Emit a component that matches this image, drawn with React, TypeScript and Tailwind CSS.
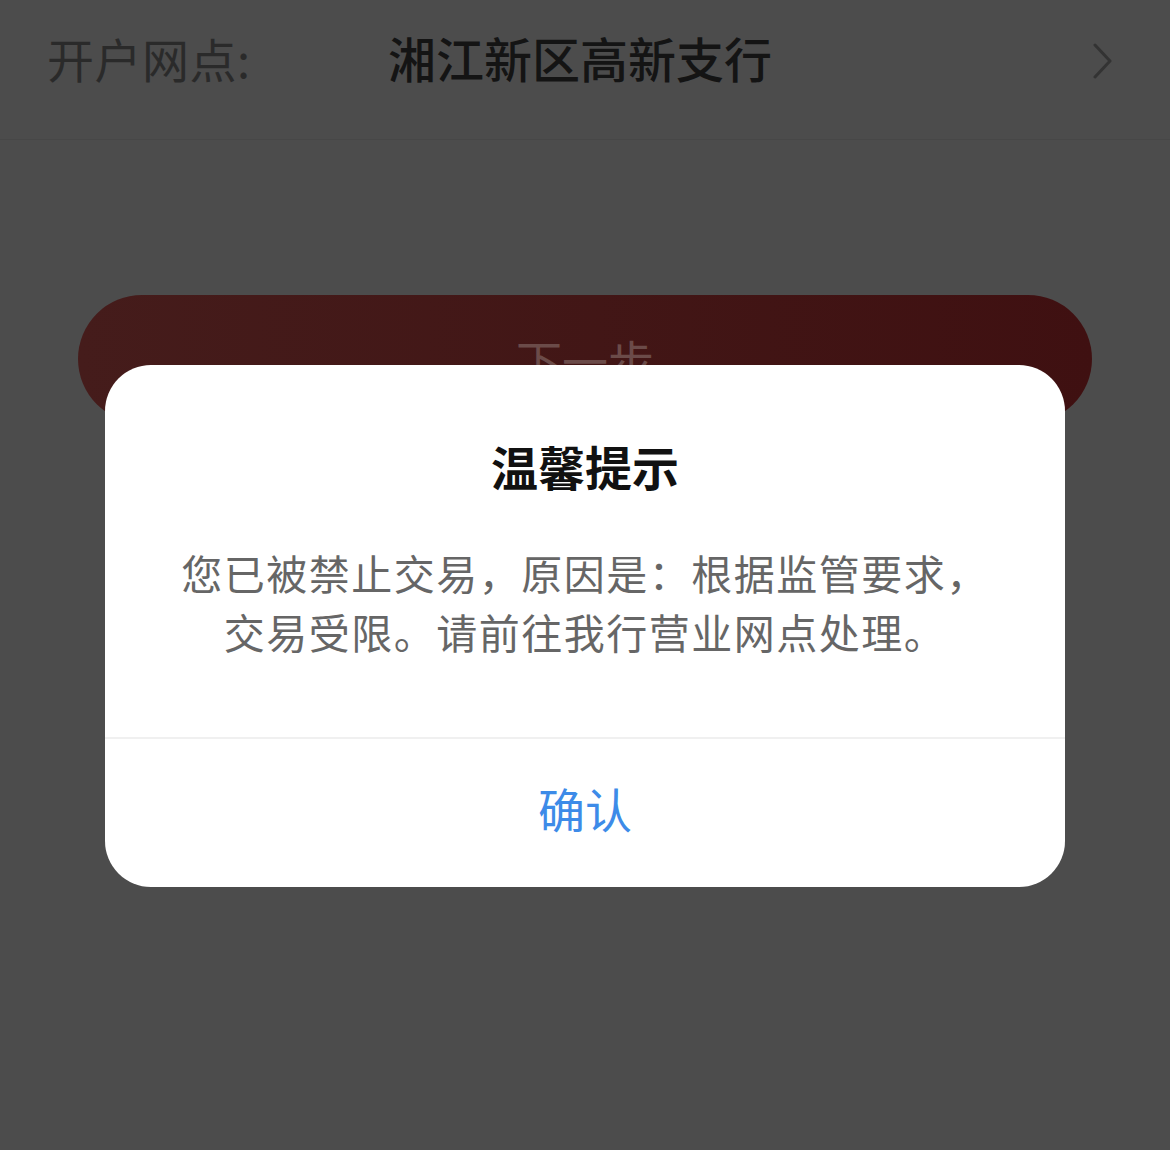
export default function App() {
  return (
    <div
      className="relative h-[1150px] w-[1170px] overflow-hidden bg-[#4c4c4c]"
      style={{ fontFamily: '"Noto Sans CJK SC", "Noto Sans", sans-serif' }}
    >
      {/* Branch row */}
      <div className="flex h-[140px] items-start border-b border-[#474747]">
        <div className="flex h-[114px] w-full items-center pl-[47px] pr-[56px]">
          <span className="w-[341px] text-[47px] leading-none tracking-[0.5px] text-[#2a2a2a]">开户网点:</span>
          <span className="flex-1 text-[48px] font-medium leading-none text-[#141414]">湘江新区高新支行</span>
          <svg width="22" height="36" viewBox="0 0 22 36" fill="none" className="mt-[8px]">
            <path d="M3 2 L18 18 L3 34" stroke="#333333" strokeWidth="3" strokeLinecap="round" strokeLinejoin="round" />
          </svg>
        </div>
      </div>

      {/* Next button */}
      <div className="mt-[155px] px-[78px]">
        <button className="flex h-[128px] w-full items-center justify-center rounded-full bg-gradient-to-r from-[#451c1b] to-[#3f1011] text-[46px] leading-none text-[#6b4b49]">
          下一步
        </button>
      </div>

      {/* Alert dialog */}
      <div className="absolute left-[105px] top-[365px] w-[960px] overflow-hidden rounded-[46px] bg-white">
        <div className="flex h-[372px] flex-col items-center pt-[71px]">
          <h2 className="text-[47px] font-bold leading-[60px] text-[#111111]">温馨提示</h2>
          <p className="mt-[47px] w-[860px] text-center text-[41px] leading-[59px] tracking-[1.5px] text-[#666666]">
            您已被禁止交易，原因是：根据监管要求，
            <br />
            交易受限。请前往我行营业网点处理。
          </p>
        </div>
        <div className="flex h-[150px] items-center justify-center border-t-2 border-[#f0f0f0] pb-[12px]">
          <span className="text-[47px] leading-none text-[#3d8be8]">确认</span>
        </div>
      </div>
    </div>
  );
}
